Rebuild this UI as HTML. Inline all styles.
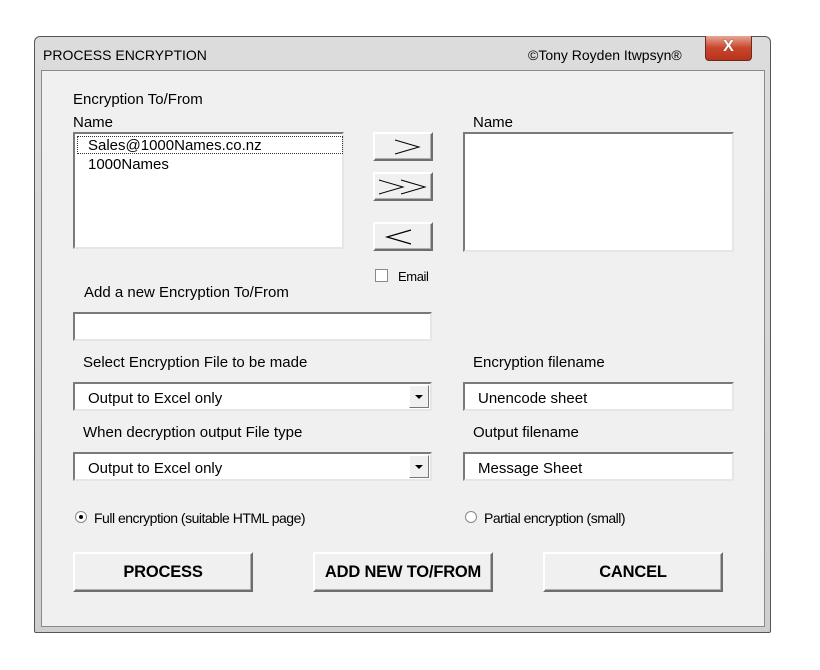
<!DOCTYPE html>
<html><head><style>
*{margin:0;padding:0;box-sizing:border-box}
body{width:820px;height:670px;background:#fff;position:relative;overflow:hidden;font-family:"Liberation Sans",Tahoma,sans-serif;color:#000}
.a{position:absolute}
.t{position:absolute;font-size:15px;line-height:18px;white-space:nowrap}
.sunk{position:absolute;background:#fff;border-top:2px solid #7a7a7a;border-left:2px solid #7a7a7a;border-right:2px solid #e6e6e6;border-bottom:2px solid #e6e6e6}
.btn{position:absolute;background:#f0f0f0;border-top:2px solid #fff;border-left:2px solid #fff;border-right:2px solid #6e6e6e;border-bottom:2px solid #6e6e6e;box-shadow:inset -1px -1px 0 #b0b0b0}
.big{font-weight:bold;font-size:16.5px;display:flex;align-items:center;justify-content:center;letter-spacing:-0.2px}
.dd{position:absolute;right:1px;top:1px;width:20px;height:23px;background:#f0f0f0;border-top:1px solid #fff;border-left:1px solid #fff;border-right:1px solid #777;border-bottom:1px solid #777}
.dd:after{content:"";position:absolute;left:5px;top:9px;border-left:4px solid transparent;border-right:4px solid transparent;border-top:4px solid #000}
.sm{font-size:14px;letter-spacing:-0.5px}
.tt{top:1px}
</style></head><body>
<div class="a" style="left:34px;top:36px;width:737px;height:597px;background:linear-gradient(#dcdcdc,#cfcfcf);border:1px solid #555;border-radius:6px 6px 2px 2px"></div>
<div class="t" style="left:43px;top:46px;font-size:14px">PROCESS ENCRYPTION</div>
<div class="t" style="left:528px;top:46px;font-size:14px">©Tony Royden Itwpsyn®</div>
<div class="a" style="left:705px;top:36px;width:47px;height:25px;background:linear-gradient(#e7a595,#c9452c 50%,#b8331c);border:1px solid #6b2a20;border-top:none;border-radius:0 0 4px 4px;color:#fff;font-weight:bold;font-size:16px;text-align:center;line-height:22px;text-shadow:0 0 1px #444">X</div>
<div class="a" style="left:41px;top:70px;width:724px;height:557px;background:#f0f0f0;border:1px solid #8a8a8a"></div>

<div class="t" style="left:73px;top:91px">Encryption To/From</div>
<div class="t" style="left:73px;top:114px">Name</div>
<div class="sunk" style="left:73px;top:132px;width:271px;height:117px"></div>
<div class="a" style="left:77px;top:136px;width:266px;height:18px;border:1px dotted #333"></div>
<div class="t" style="left:88px;top:137px">Sales@1000Names.co.nz</div>
<div class="t" style="left:88px;top:156px">1000Names</div>

<div class="btn" style="left:373px;top:132px;width:60px;height:29px"><svg width="56" height="25"><path d="M20 6 L44 13 L20 20" fill="none" stroke="#000" stroke-width="1"/></svg></div>
<div class="btn" style="left:373px;top:172px;width:60px;height:29px"><svg width="56" height="25"><path d="M4 6 L28 13 L4 20 M26 6 L50 13 L26 20" fill="none" stroke="#000" stroke-width="1"/></svg></div>
<div class="btn" style="left:373px;top:222px;width:60px;height:29px"><svg width="56" height="25"><path d="M36 6 L12 13 L36 20" fill="none" stroke="#000" stroke-width="1.2"/></svg></div>

<div class="t" style="left:473px;top:114px">Name</div>
<div class="sunk" style="left:463px;top:132px;width:271px;height:120px"></div>

<div class="a" style="left:375px;top:269px;width:13px;height:13px;background:#fff;border:1px solid #8a8a8a"></div>
<div class="t sm" style="left:398px;top:268px;font-size:13px;letter-spacing:-0.4px">Email</div>

<div class="t" style="left:84px;top:284px">Add a new Encryption To/From</div>
<div class="sunk" style="left:73px;top:312px;width:359px;height:29px"></div>

<div class="t" style="left:83px;top:354px">Select Encryption File to be made</div>
<div class="sunk" style="left:73px;top:382px;width:359px;height:29px"><div class="t" style="left:13px;top:6px">Output to Excel only</div><div class="dd"></div></div>
<div class="t" style="left:83px;top:424px">When decryption output File type</div>
<div class="sunk" style="left:73px;top:452px;width:359px;height:29px"><div class="t" style="left:13px;top:6px">Output to Excel only</div><div class="dd"></div></div>

<div class="t" style="left:473px;top:354px">Encryption filename</div>
<div class="sunk" style="left:463px;top:382px;width:271px;height:29px"><div class="t" style="left:13px;top:6px">Unencode sheet</div></div>
<div class="t" style="left:473px;top:424px">Output filename</div>
<div class="sunk" style="left:463px;top:452px;width:271px;height:29px"><div class="t" style="left:13px;top:6px">Message Sheet</div></div>

<div class="a" style="left:75px;top:511px;width:12px;height:12px;border-radius:50%;background:#fff;border:1px solid #888"><div class="a" style="left:3px;top:3px;width:4px;height:4px;border-radius:50%;background:#000"></div></div>
<div class="t sm" style="left:94px;top:509px">Full encryption (suitable HTML page)</div>
<div class="a" style="left:465px;top:511px;width:12px;height:12px;border-radius:50%;background:#fff;border:1px solid #888"></div>
<div class="t sm" style="left:484px;top:509px">Partial encryption (small)</div>

<div class="btn big" style="left:73px;top:552px;width:180px;height:40px">PROCESS</div>
<div class="btn big" style="left:313px;top:552px;width:180px;height:40px">ADD NEW TO/FROM</div>
<div class="btn big" style="left:543px;top:552px;width:180px;height:40px">CANCEL</div>
</body></html>
